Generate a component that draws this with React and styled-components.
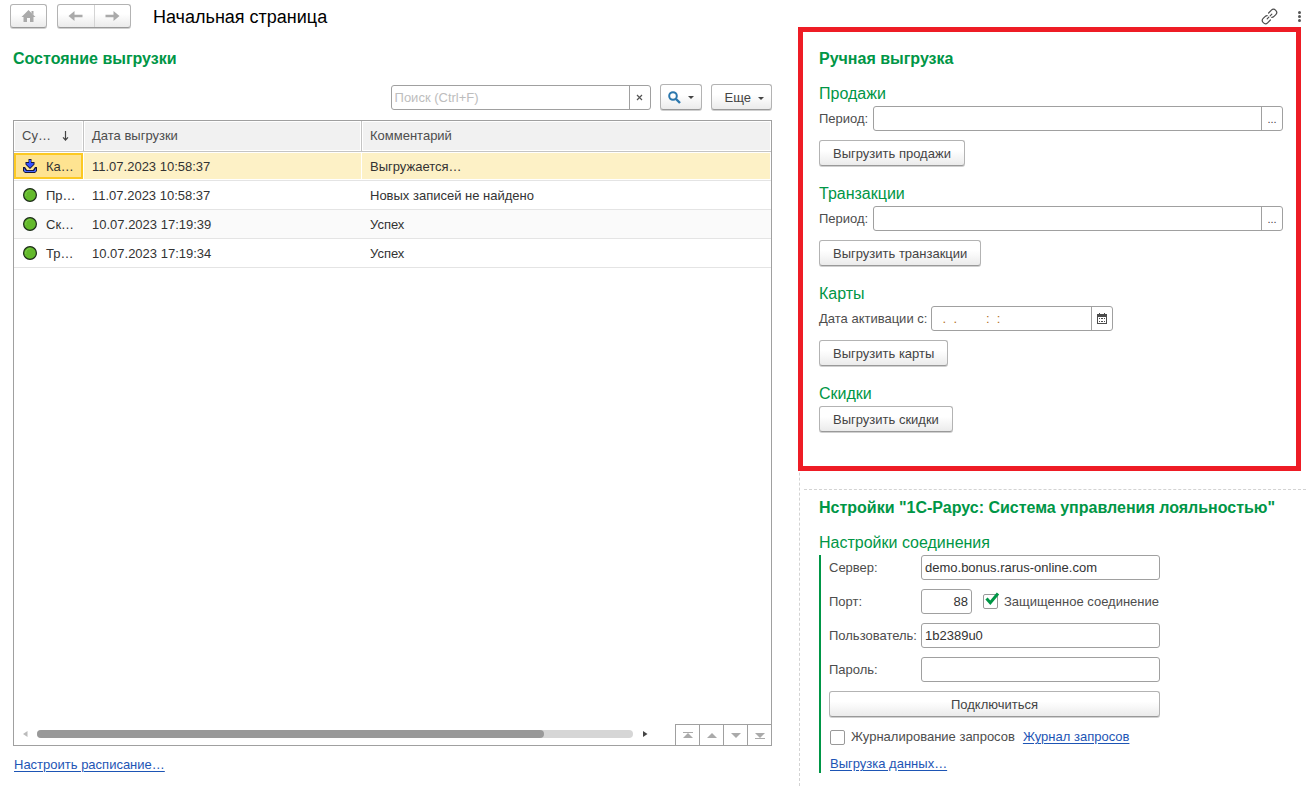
import React from 'react'
import styled, { createGlobalStyle, css } from 'styled-components'


const GlobalStyle = createGlobalStyle`
    * {
        box-sizing: border-box;
    }
    body {
        margin: 0;
        background: #fff;
        color: #333;
        font-family: "Liberation Sans", Arial, sans-serif;
        font-size: 13px;
        line-height: 18px;
    }
    button, input {
        font: inherit;
        color: inherit;
    }
`;

const Page = styled.div`
    display: flex;
    flex-direction: column;
    min-height: 100vh;
`;

/* Header */

const Header = styled.header`
    display: flex;
    align-items: center;
    height: 32px;
    padding: 0 5px 0 10px;
`;
const PageTitle = styled.h1`
    flex: 1;
    margin: 0 0 0 22px;
    padding-top: 2px;
    color: #000;
    font-size: 18px;
    font-weight: 400;
    line-height: 24px;
`;
const raised = css`
    border: 1px solid #b3b3b3;
    border-bottom-color: #999;
    border-radius: 3px;
    background: linear-gradient(#fff 40%, #ebebeb);
    box-shadow: 0 1px 0 #d0d0d0;
`;
const HomeButton = styled.button`
    ${raised}
    display: flex;
    align-items: center;
    justify-content: center;
    width: 37px;
    height: 24px;
    padding: 0;
    margin-right: 10px;
`;
const NavGroup = styled.div`
    ${raised}
    display: flex;
    width: 74px;
    height: 24px;
`;
const NavButton = styled.button`
    display: flex;
    flex: 1;
    align-items: center;
    justify-content: center;
    padding: 0;
    border: 0;
    background: none;

    & + & {
        border-left: 1px solid #d4d4d4;
    }
`;
const PlainButton = styled.button`
    display: flex;
    padding: 0;
    margin-left: ${({ $gap }) => $gap || 0}px;
    border: 0;
    background: none;
`;

/* Columns */

const Columns = styled.main`
    display: grid;
    flex: 1;
    grid-template-columns: minmax(0, 799fr) minmax(0, 507fr);
`;
const LeftColumn = styled.section`
    display: flex;
    flex-direction: column;
    padding: 17px 27px 11px 13px;
`;
const RightColumn = styled.div`
    padding: 0 0 13px 3px;
    border-left: 1px dashed #d3d3d3;
`;
const Title = styled.h2`
    margin: 0;
    color: #009646;
    font-size: 16px;
    font-weight: 700;
    line-height: 20px;
`;
const Subtitle = styled.h3`
    margin: 0 0 1px;
    color: #009646;
    font-size: 16px;
    font-weight: 400;
    line-height: 22px;
`;
const Link = styled.a`
    color: #1d55b5;
    text-decoration: underline;
    text-underline-offset: 2px;
`;
const ScheduleLink = styled(Link)`
    align-self: flex-start;
    margin: 9px 0 0 1px;
    line-height: 20px;
`;
const Button = styled.button`
    ${raised}
    display: flex;
    align-items: center;
    justify-content: center;
    width: ${({ $wide }) => ($wide ? '100%' : 'auto')};
    height: 26px;
    padding: 2px 13px 0;
    margin-bottom: 1px;
    color: #444;
    white-space: nowrap;
`;
const SearchButton = styled(Button)`
    gap: 7px;
    padding: 0 7px;
`;
const MoreButton = styled(Button)`
    gap: 7px;
    padding: 2px 7px 0 13px;
`;

/* Inputs */

const InputBox = styled.div`
    display: flex;
    flex: ${({ $width }) => ($width ? `0 0 ${$width}px` : '1')};
    min-width: 0;
    height: 25px;
    border: 1px solid #a0a0a0;
    border-radius: 3px;
    background: #fff;
`;
const TextInput = styled.input`
    flex: 1;
    width: 100%;
    min-width: 0;
    padding: 0 3px;
    border: 0;
    outline: 0;
    background: none;
    color: ${({ $mask }) => ($mask ? '#b5701f' : '#333')};
    text-align: ${({ $right }) => ($right ? 'right' : 'left')};

    &::placeholder {
        color: #bdbdbd;
        opacity: 1;
    }
`;
const InputButton = styled.button`
    display: flex;
    flex: 0 0 21px;
    align-items: center;
    justify-content: center;
    padding: 0;
    border: 0;
    border-left: 1px solid #a0a0a0;
    background: none;
    color: #444;
    font-size: 11px;
`;
const Label = styled.label`
    flex: none;
    width: ${({ $width }) => ($width ? `${$width}px` : 'auto')};
    color: #4d4d4d;
`;

/* Table */

const Toolbar = styled.div`
    display: flex;
    align-items: center;
    justify-content: flex-end;
    gap: 9px;
    height: 27px;
    margin: 15px 0 9px;
`;
const Frame = styled.div`
    display: flex;
    flex: 1;
    flex-direction: column;
    border: 1px solid #a0a0a0;
`;
const TableArea = styled.div`
    flex: 1;
`;
const Table = styled.table`
    width: 100%;
    border-collapse: separate;
    border-spacing: 0;
    table-layout: fixed;
`;
const Th = styled.th`
    width: ${({ $width }) => ($width ? `${$width}px` : 'auto')};
    height: 31px;
    padding: 0 8px;
    border-bottom: 1px solid #c4c4c4;
    background: #f1f1f1;
    box-shadow: inset 0 0 0 1px #fff;
    color: #4d4d4d;
    font-weight: 400;
    text-align: left;

    &:not(:last-child) {
        border-right: 1px solid #c4c4c4;
    }
`;
const HeadCell = styled.div`
    display: flex;
    align-items: center;
    justify-content: space-between;
    padding-right: 6px;
`;
const Td = styled.td`
    height: 29px;
    padding: 2px 8px 0;
    border-bottom: 1px solid #e4e4e4;
    white-space: nowrap;

    &:first-child {
        padding: 0;
    }
`;
const Tr = styled.tr`
    &:nth-child(odd) {
        background: #fafafa;
    }
    &:nth-child(even) {
        background: #fff;
    }
    &:first-child {
        background: #fdf1c6;
    }
    &:first-child td {
        box-shadow: inset 0 1px 0 #fff, inset 0 -1px 0 #fff, inset -1px 0 0 #fff;
    }
`;
const EntityCell = styled.div`
    display: flex;
    align-items: center;
    gap: 9px;
    height: 26px;
    margin-right: 1px;
    padding-left: 7px;
    border: 2px solid ${({ $active }) => ($active ? '#fcc922' : 'transparent')};
    background: ${({ $active }) => ($active ? '#fee391' : 'none')};
`;
const EntityName = styled.span`
    padding-top: 2px;
`;
const Footer = styled.div`
    display: flex;
    align-items: center;
    height: 21px;
    padding-left: 9px;
`;
const ScrollBar = styled.div`
    display: flex;
    flex: 1;
    align-items: center;
    padding-bottom: 2px;
`;
const Track = styled.div`
    flex: 1;
    height: 8px;
    margin: 0 10px 0 9px;
    border-radius: 4px;
    background: #d6d6d6;
`;
const Thumb = styled.div`
    width: ${({ $part }) => $part}%;
    height: 8px;
    border-radius: 4px;
    background: #999;
`;
const Pager = styled.div`
    display: flex;
    align-self: stretch;
    margin-left: 27px;
`;
const PagerButton = styled.button`
    display: flex;
    align-items: center;
    justify-content: center;
    width: 24px;
    padding: 0;
    border: solid #a0a0a0;
    border-width: 1px 0 0 1px;
    background: #fff;
`;

/* Right panels */

const ManualPanel = styled.section`
    min-height: 434px;
    margin: 0 10px 0 0;
    padding: 17px 13px 33px 16px;
    outline: 5px solid #ee1c25;
`;
const Group = styled.div`
    display: flex;
    flex-direction: column;
    align-items: flex-start;
    margin-top: ${({ $first }) => ($first ? 14 : 16)}px;
`;
const Row = styled.div`
    display: flex;
    align-items: center;
    align-self: stretch;
    gap: ${({ $gap }) => $gap || 0}px;
    margin-bottom: ${({ $bottom }) => $bottom || 0}px;
`;
const SettingsPanel = styled.section`
    margin: 23px 0 0 1px;
    padding: 8px 10px 0 15px;
    border-top: 1px dashed #d3d3d3;
`;
const Connection = styled.form`
    display: flex;
    flex-direction: column;
    gap: 9px;
    max-width: 341px;
    padding-left: 8px;
    border-left: 2px solid #009646;
`;
const PortCheck = styled.div`
    margin-left: 11px;
`;
const CheckLabel = styled.label`
    display: flex;
    align-items: center;
    gap: 6px;
    color: #4d4d4d;
    white-space: nowrap;
`;
const CheckWrap = styled.span`
    position: relative;
    display: flex;

    svg {
        position: absolute;
        left: 2px;
        top: -2px;
        display: none;
        pointer-events: none;
    }
    input:checked + svg {
        display: block;
    }
`;
const Check = styled.input`
    width: 15px;
    height: 15px;
    margin: 0;
    appearance: none;
    border: 1px solid #999;
    border-radius: 2px;
    background: #fff;
`;
const BottomLinks = styled.div`
    display: flex;
    align-items: center;
    gap: 8px;
    padding-left: 1px;
`;

/* Icons */

const HomeIcon = () => (
  <svg width="15" height="14" viewBox="0 0 15 14" fill="#aaa">
    <path d="M7.5 1 L14.5 8 H12.5 V13 H9 V9 H6 V13 H2.5 V8 H0.5 Z" />
    <path d="M10.5 2 H12.5 V6 L10.5 4 Z" />
  </svg>
)

const ArrowIcon = ({ right }) => (
  <svg width="15" height="12" viewBox="0 0 15 12" fill="#aaa">
    <path d={right ? 'M0.5 4.7 H8.5 V1 L14.5 6 L8.5 11 V7.3 H0.5 Z' : 'M14.5 4.7 H6.5 V1 L0.5 6 L6.5 11 V7.3 H14.5 Z'} />
  </svg>
)

const ChainIcon = () => (
  <svg width="17" height="17" viewBox="0 0 17 17" fill="none" stroke="#4d4d4d" strokeWidth="1.2" strokeLinecap="round">
    <path d="M7.6 5 L10.4 2.2 C11.6 1 13.4 1 14.7 2.3 C16 3.6 16 5.4 14.8 6.6 L13 8.4 C12.2 9.2 11.4 9.4 10.8 9.4" />
    <path d="M9.4 12 L6.6 14.8 C5.4 16 3.6 16 2.3 14.7 C1 13.4 1 11.6 2.2 10.4 L4 8.6 C4.8 7.8 5.6 7.6 6.2 7.6" />
    <path d="M6.2 10.8 L7.8 9.2 M9.2 7.8 L10.8 6.2" />
  </svg>
)

const DotsIcon = () => (
  <svg width="3" height="11" viewBox="0 0 3 11" fill="#555">
    <circle cx="1.5" cy="1.5" r="1.5" />
    <circle cx="1.5" cy="5.5" r="1.5" />
    <circle cx="1.5" cy="9.5" r="1.5" />
  </svg>
)

const SearchIcon = () => (
  <svg width="13" height="13" viewBox="0 0 13 13" fill="none" stroke="#2b77ad">
    <circle cx="5" cy="5" r="3.8" strokeWidth="2" />
    <path d="M8 8 L12 12" strokeWidth="2.4" />
  </svg>
)

const CaretIcon = () => (
  <svg width="6" height="3" viewBox="0 0 6 3" fill="#444">
    <path d="M0 0 H6 L3 3 Z" />
  </svg>
)

const CrossIcon = () => (
  <svg width="7" height="7" viewBox="0 0 7 7" stroke="#555" strokeWidth="1.2">
    <path d="M1 1 L6 6 M6 1 L1 6" />
  </svg>
)

const SortIcon = () => (
  <svg width="7" height="10" viewBox="0 0 7 10" fill="none" stroke="#444" strokeWidth="1.2">
    <path d="M3.5 0 V9 M1 6.3 L3.5 9 L6 6.3" />
  </svg>
)

const DownloadIcon = () => (
  <svg width="14" height="14" viewBox="0 0 14 14">
    <path d="M0 8 H2 L4 11 H10 L12 8 H14 V12 L12 14 H2 L0 12 Z" fill="#16163c" />
    <path d="M1 9 L3 12 H11 L13 9 V12 L12 13 H2 L1 12 Z" fill="#4a6bff" />
    <path d="M5.5 0 H8.5 V3 H11.5 V5.5 L7 10 L2.5 5.5 V3 H5.5 Z" fill="#16163c" />
    <path d="M6 1 H8 V4 H10.6 V5.2 L7 8.8 L3.4 5.2 V4 H6 Z" fill="#3350ff" />
  </svg>
)

const OkIcon = () => (
  <svg width="14" height="14" viewBox="0 0 14 14">
    <circle cx="7" cy="7" r="6.4" fill="#63b92b" stroke="#1d2b1a" strokeWidth="1.2" />
    <path d="M2.8 8 A4.4 4.4 0 0 1 7.5 2.6" fill="none" stroke="#7ccc48" />
  </svg>
)

const CalendarIcon = () => (
  <svg width="10" height="11" viewBox="0 0 10 11" shapeRendering="crispEdges">
    <path d="M0 1 H10 V11 H0 Z" fill="#4d4d4d" />
    <path d="M1 4 H9 V10 H1 Z" fill="#fff" />
    <path d="M2 0 H3 V2 H2 Z M7 0 H8 V2 H7 Z" fill="#4d4d4d" />
    <path d="M2 5 H3 V6 H2 Z M4 5 H6 V6 H4 Z M7 5 H8 V6 H7 Z M2 8 H3 V9 H2 Z M4 8 H6 V9 H4 Z M7 8 H8 V9 H7 Z" fill="#4d4d4d" />
  </svg>
)

const TickIcon = () => (
  <svg width="15" height="14" viewBox="0 0 15 14" fill="none" stroke="#009646" strokeWidth="3">
    <path d="M1.5 6.5 L5.3 10.8 L13 1.5" />
  </svg>
)

const ScrollArrow = ({ right }) => (
  <svg width="5" height="6" viewBox="0 0 5 6" fill={right ? '#444' : '#bbb'}>
    <path d={right ? 'M0 0 L4.5 3 L0 6 Z' : 'M4.5 0 L0 3 L4.5 6 Z'} />
  </svg>
)

const PagerIcon = ({ down, bar }) => (
  <svg width="10" height="7" viewBox="0 0 10 7" fill="#aaa">
    <path d={down ? 'M0 1 H10 L5 6 Z' : 'M0 6 H10 L5 1 Z'} />
    {bar && <path d={down ? 'M0 6 H10 V7 H0 Z' : 'M0 0 H10 V1 H0 Z'} />}
  </svg>
)

const rows = [
  { name: 'Ка…', date: '11.07.2023 10:58:37', comment: 'Выгружается…', loading: true },
  { name: 'Пр…', date: '11.07.2023 10:58:37', comment: 'Новых записей не найдено' },
  { name: 'Ск…', date: '10.07.2023 17:19:39', comment: 'Успех' },
  { name: 'Тр…', date: '10.07.2023 17:19:34', comment: 'Успех' },
]

const ExportState = () => {
  return (
    <LeftColumn>
        <Title>Состояние выгрузки</Title>
        <Toolbar>
            <InputBox $width={260}>
                <TextInput type='text' placeholder='Поиск (Ctrl+F)' aria-label='Поиск' />
                <InputButton type='button' aria-label='Очистить'><CrossIcon /></InputButton>
            </InputBox>
            <SearchButton type='button' aria-label='Найти'><SearchIcon /><CaretIcon /></SearchButton>
            <MoreButton type='button'>Еще<CaretIcon /></MoreButton>
        </Toolbar>
        <Frame>
            <TableArea>
                <Table>
                    <thead>
                        <tr>
                            <Th $width={70}><HeadCell>Су…<SortIcon /></HeadCell></Th>
                            <Th $width={278}>Дата выгрузки</Th>
                            <Th>Комментарий</Th>
                        </tr>
                    </thead>
                    <tbody>
                        {rows.map((row) => (
                            <Tr key={row.name}>
                                <Td>
                                    <EntityCell $active={row.loading}>
                                        {row.loading ? <DownloadIcon /> : <OkIcon />}
                                        <EntityName>{row.name}</EntityName>
                                    </EntityCell>
                                </Td>
                                <Td>{row.date}</Td>
                                <Td>{row.comment}</Td>
                            </Tr>
                        ))}
                    </tbody>
                </Table>
            </TableArea>
            <Footer>
                <ScrollBar>
                    <ScrollArrow />
                    <Track><Thumb $part={85} /></Track>
                    <ScrollArrow right />
                </ScrollBar>
                <Pager>
                    <PagerButton type='button' aria-label='В начало'><PagerIcon bar /></PagerButton>
                    <PagerButton type='button' aria-label='Вверх'><PagerIcon /></PagerButton>
                    <PagerButton type='button' aria-label='Вниз'><PagerIcon down /></PagerButton>
                    <PagerButton type='button' aria-label='В конец'><PagerIcon down bar /></PagerButton>
                </Pager>
            </Footer>
        </Frame>
        <ScheduleLink href='#schedule'>Настроить расписание…</ScheduleLink>
    </LeftColumn>
  )
}

const PeriodGroup = ({ id, title, action, first }) => {
  return (
    <Group $first={first}>
        <Subtitle>{title}</Subtitle>
        <Row $gap={5} $bottom={9}>
            <Label htmlFor={id}>Период:</Label>
            <InputBox>
                <TextInput id={id} type='text' />
                <InputButton type='button' aria-label='Выбрать период'>...</InputButton>
            </InputBox>
        </Row>
        <Button type='button'>{action}</Button>
    </Group>
  )
}

const ManualExport = () => {
  return (
    <ManualPanel>
        <Title>Ручная выгрузка</Title>
        <PeriodGroup first id='sales' title='Продажи' action='Выгрузить продажи' />
        <PeriodGroup id='transactions' title='Транзакции' action='Выгрузить транзакции' />
        <Group>
            <Subtitle>Карты</Subtitle>
            <Row $gap={4} $bottom={9}>
                <Label htmlFor='activation'>Дата активации с:</Label>
                <InputBox $width={182}>
                    <TextInput id='activation' type='text' $mask defaultValue={'  .  .        :  :'} />
                    <InputButton type='button' aria-label='Календарь'><CalendarIcon /></InputButton>
                </InputBox>
            </Row>
            <Button type='button'>Выгрузить карты</Button>
        </Group>
        <Group>
            <Subtitle>Скидки</Subtitle>
            <Button type='button'>Выгрузить скидки</Button>
        </Group>
    </ManualPanel>
  )
}

const Checkbox = ({ children, ...rest }) => (
  <CheckLabel>
    <CheckWrap>
        <Check type='checkbox' {...rest} />
        <TickIcon />
    </CheckWrap>
    {children}
  </CheckLabel>
)

const Settings = () => {
  return (
    <SettingsPanel>
        <Title>Нстройки "1С-Рарус: Система управления лояльностью"</Title>
        <Group $first>
            <Subtitle>Настройки соединения</Subtitle>
        </Group>
        <Connection>
            <Row>
                <Label htmlFor='server' $width={92}>Сервер:</Label>
                <InputBox><TextInput id='server' type='text' defaultValue='demo.bonus.rarus-online.com' /></InputBox>
            </Row>
            <Row>
                <Label htmlFor='port' $width={92}>Порт:</Label>
                <InputBox $width={51}><TextInput id='port' type='text' $right defaultValue='88' /></InputBox>
                <PortCheck><Checkbox defaultChecked>Защищенное соединение</Checkbox></PortCheck>
            </Row>
            <Row>
                <Label htmlFor='user' $width={92}>Пользователь:</Label>
                <InputBox><TextInput id='user' type='text' defaultValue='1b2389u0' /></InputBox>
            </Row>
            <Row>
                <Label htmlFor='password' $width={92}>Пароль:</Label>
                <InputBox><TextInput id='password' type='password' /></InputBox>
            </Row>
            <Row $bottom={1}>
                <Button type='button' $wide>Подключиться</Button>
            </Row>
            <BottomLinks>
                <Checkbox>Журналирование запросов</Checkbox>
                <Link href='#log'>Журнал запросов</Link>
            </BottomLinks>
            <BottomLinks>
                <Link href='#export'>Выгрузка данных…</Link>
            </BottomLinks>
        </Connection>
    </SettingsPanel>
  )
}

const App = () => {
  return (
    <Page>
        <GlobalStyle />
        <Header>
            <HomeButton type='button' aria-label='Домой'><HomeIcon /></HomeButton>
            <NavGroup>
                <NavButton type='button' aria-label='Назад'><ArrowIcon /></NavButton>
                <NavButton type='button' aria-label='Вперед'><ArrowIcon right /></NavButton>
            </NavGroup>
            <PageTitle>Начальная страница</PageTitle>
            <PlainButton type='button' aria-label='Ссылка'><ChainIcon /></PlainButton>
            <PlainButton type='button' aria-label='Меню' $gap={20}><DotsIcon /></PlainButton>
        </Header>
        <Columns>
            <ExportState />
            <RightColumn>
                <ManualExport />
                <Settings />
            </RightColumn>
        </Columns>
    </Page>
  )
}

export default App
